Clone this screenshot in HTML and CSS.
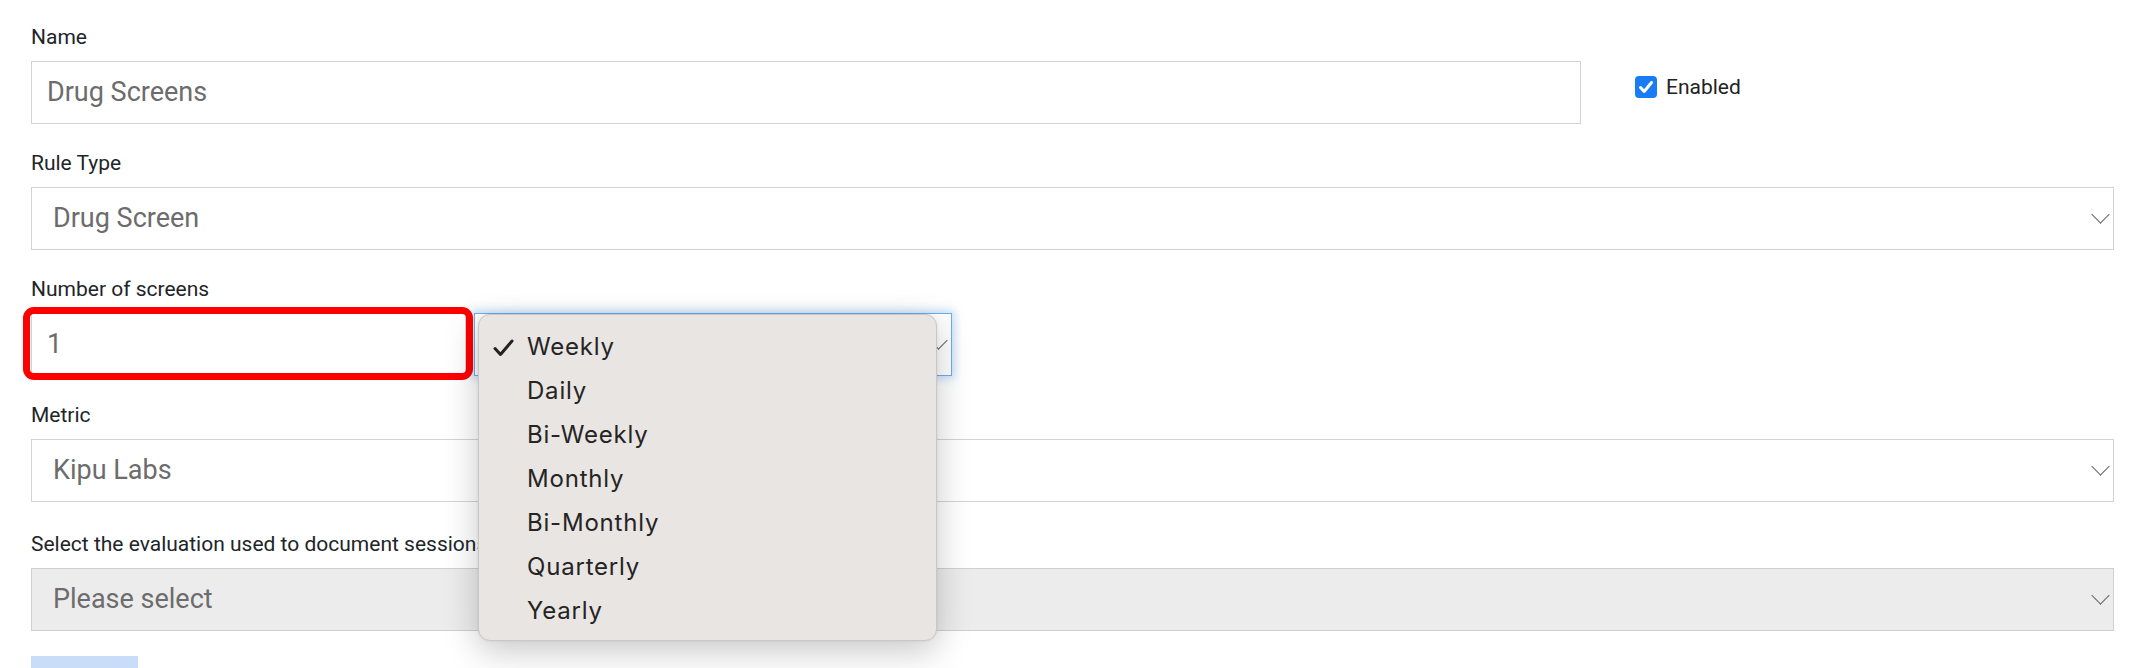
FILE: index.html
```html
<!DOCTYPE html>
<html lang="en">
<head>
<meta charset="utf-8">
<title>Drug Screens Rule</title>
<link rel="stylesheet" href="styles.css">
</head>
<body>
<form class="form">
  <div class="row-top">
    <div class="group name-group">
      <label class="label">Name</label>
      <div class="control input">Drug Screens</div>
    </div>
    <div class="check-group">
      <span class="checkbox">
        <svg width="22" height="22" viewBox="0 0 22 22"><path d="M5.5 11.5 L9.2 15.5 L16.5 6.5" fill="none" stroke="#fff" stroke-width="3" stroke-linecap="round" stroke-linejoin="round"/></svg>
      </span>
      <span class="check-label">Enabled</span>
    </div>
  </div>

  <div class="group">
    <label class="label">Rule Type</label>
    <div class="control select">Drug Screen<span class="chev"></span></div>
  </div>

  <div class="group">
    <label class="label">Number of screens</label>
    <div class="num-row">
      <div class="control input num">1</div>
      <div class="control select freq focused"><span class="chev"></span></div>
      <div class="highlight"></div>
      <div class="menu">
        <div class="menu-item checked"><svg class="tick" width="21" height="18" viewBox="0 0 21 18"><path d="M2 9.5 L7.5 15.5 L19 2" fill="none" stroke="#222" stroke-width="3" stroke-linecap="round" stroke-linejoin="round"/></svg>Weekly</div>
        <div class="menu-item">Daily</div>
        <div class="menu-item">Bi-Weekly</div>
        <div class="menu-item">Monthly</div>
        <div class="menu-item">Bi-Monthly</div>
        <div class="menu-item">Quarterly</div>
        <div class="menu-item">Yearly</div>
      </div>
    </div>
  </div>

  <div class="group">
    <label class="label">Metric</label>
    <div class="control select">Kipu Labs<span class="chev"></span></div>
  </div>

  <div class="group group-last">
    <label class="label">Select the evaluation used to document sessions</label>
    <div class="control select disabled">Please select<span class="chev"></span></div>
  </div>

  <div class="btn"></div>
</form>
</body>
</html>
```

FILE: styles.css
```css
html, body {
  margin: 0;
  padding: 0;
  background: #fff;
  overflow: hidden;
}
body {
  font-family: Roboto, "Liberation Sans", sans-serif;
  color: #212529;
}
.form {
  padding: 23px 20px 0 31px;
}
.row-top {
  display: flex;
}
.name-group {
  width: 1550px;
}
.check-group {
  display: flex;
  align-items: center;
  margin-left: 54px;
  padding-top: 53px;
  height: 22px;
}
.checkbox {
  width: 22px;
  height: 22px;
  border-radius: 4px;
  background: #1a7cf5;
  display: inline-flex;
}
.check-label {
  margin-left: 9px;
  font-size: 21px;
  line-height: 22px;
  color: #222;
}
.group {
  margin-bottom: 25px;
}
.group-last {
  padding-top: 3px;
}
.label {
  display: block;
  font-size: 21px;
  line-height: 28px;
  margin-bottom: 10px;
  color: #212529;
}
.control {
  box-sizing: border-box;
  height: 63px;
  border: 1px solid #d3d3d3;
  background: #fff;
  font-size: 27px;
  line-height: 61px;
  color: #6c6c6c;
  padding: 0 15px;
  position: relative;
}
.select {
  padding-left: 21px;
}
.select.disabled {
  background: #ececec;
  border-color: #d0d0d0;
}
.chev {
  position: absolute;
  right: 6px;
  top: 50%;
  width: 12px;
  height: 12px;
  margin-top: -11px;
  border-right: 1.6px solid #666;
  border-bottom: 1.6px solid #666;
  transform: rotate(45deg);
}
.num-row {
  position: relative;
  display: flex;
  gap: 8px;
}
.num {
  width: 435px;
}
.freq {
  width: 478px;
}
.focused {
  border-color: #6aaef0;
  box-shadow: 0 0 8px 3px rgba(100, 165, 235, 0.35);
}
.highlight {
  position: absolute;
  z-index: 5;
  left: -8px;
  top: -6px;
  width: 450px;
  height: 73px;
  box-sizing: border-box;
  border: 7.5px solid #fe0000;
  border-radius: 11px;
}
.menu {
  position: absolute;
  z-index: 10;
  left: 447px;
  top: 1px;
  width: 459px;
  height: 327px;
  box-sizing: border-box;
  background: #e9e5e3;
  border: 1px solid #cbc7c5;
  border-radius: 12px;
  box-shadow: 0 10px 34px rgba(0, 0, 0, 0.22), 0 0 3px rgba(0, 0, 0, 0.08);
  padding-top: 10px;
  font-family: Inter, "Open Sans", sans-serif;
}
.menu-item {
  position: relative;
  height: 44px;
  line-height: 44px;
  padding-left: 48px;
  font-size: 24px;
  letter-spacing: 0.8px;
  color: #242424;
}
.tick {
  position: absolute;
  left: 14px;
  top: 14px;
}
.btn {
  width: 107px;
  height: 44px;
  background: #c9ddf9;
  margin-top: 2px;
}
```
